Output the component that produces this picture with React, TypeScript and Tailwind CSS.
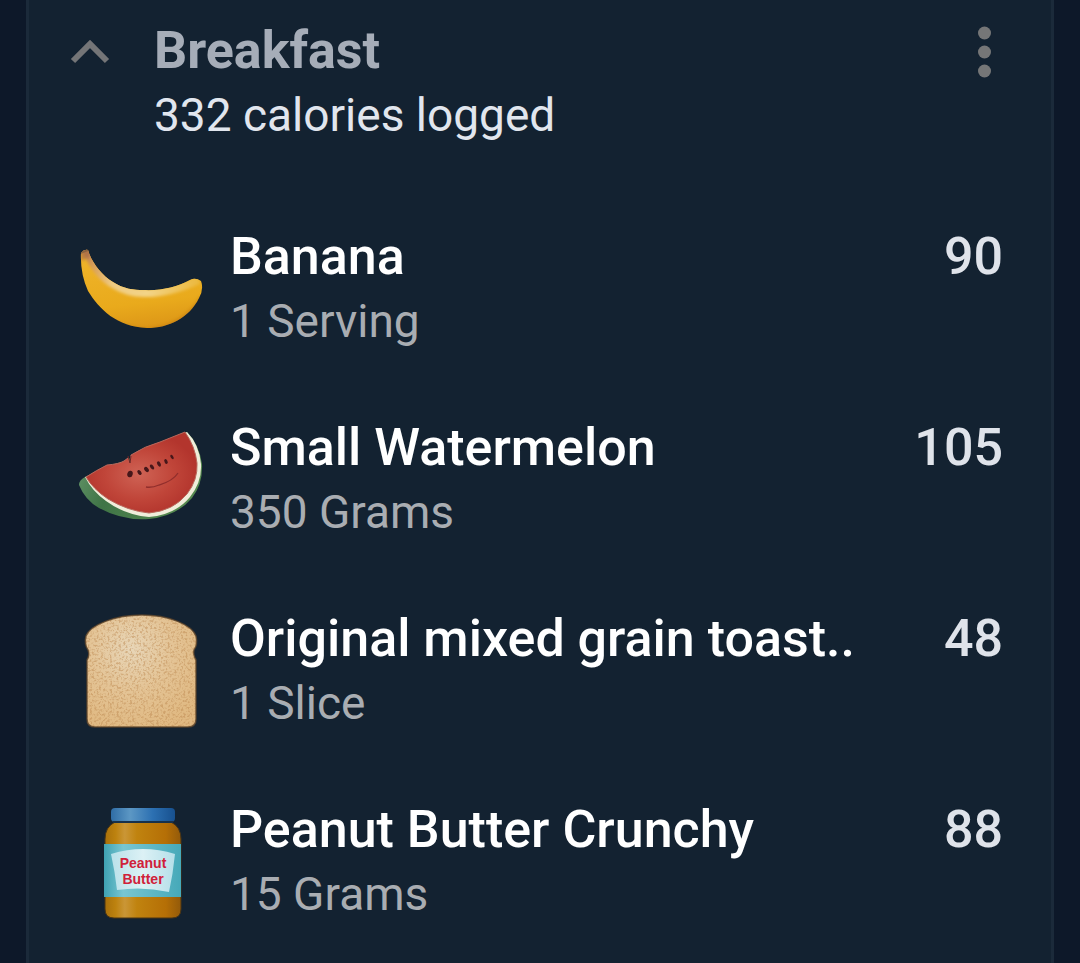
import type { ReactNode } from 'react';

interface FoodItem {
  id: string;
  name: string;
  amount: string;
  calories: number;
  icon: ReactNode;
}

function BananaIcon() {
  return (
    <svg viewBox="0 2 128 128" className="w-full h-full" aria-hidden="true">
      <defs>
        <linearGradient id="banana-body" x1="0" y1="0.2" x2="0.1" y2="1">
          <stop offset="0" stopColor="#f0b62c" />
          <stop offset="0.6" stopColor="#e9aa1c" />
          <stop offset="1" stopColor="#d58a14" />
        </linearGradient>
        <linearGradient id="banana-shine" gradientUnits="userSpaceOnUse" x1="6" y1="28" x2="124" y2="60">
          <stop offset="0" stopColor="#b5764a" />
          <stop offset="0.12" stopColor="#d9a05a" />
          <stop offset="0.3" stopColor="#efcb82" />
          <stop offset="0.6" stopColor="#f3d487" />
          <stop offset="1" stopColor="#ebb73a" />
        </linearGradient>
        <clipPath id="banana-clip">
          <path d="M4 30 Q7 26 11 27 C14 38 24 52 36 59 C46 66 58 67 66 67 C84 68 100 64 113 57 Q118 54 124 58 Q127 66 122 75 C112 95 92 105 70 105 C40 104 22 86 11 68 Q3 50 4 30Z" />
        </clipPath>
        <filter id="banana-soft" x="-10%" y="-20%" width="120%" height="140%">
          <feGaussianBlur stdDeviation="1.5" />
        </filter>
      </defs>
      <g clipPath="url(#banana-clip)">
        <rect width="128" height="128" fill="url(#banana-body)" />
        <path d="M9 24 C14 42 26 56 38 62 C48 68 58 70 66 70 C86 71 104 65 122 57" fill="none" stroke="url(#banana-shine)" strokeWidth="8" filter="url(#banana-soft)" />
        <path d="M6 70 Q26 106 70 107 Q106 105 125 74" fill="none" stroke="#b96f10" strokeWidth="4" opacity="0.5" filter="url(#banana-soft)" />
        <path d="M2 24 L13 24 L13 34 L4 38Z" fill="#a96c46" opacity="0.7" filter="url(#banana-soft)" />
        <path d="M3 30 L11 27" stroke="#8a6240" strokeWidth="2" />
      </g>
    </svg>
  );
}

function WatermelonIcon() {
  return (
    <svg viewBox="0 2 128 128" className="w-full h-full" aria-hidden="true">
      <defs>
        <radialGradient id="melon-flesh" cx="0.48" cy="0.52" r="0.52">
          <stop offset="0" stopColor="#cf6355" />
          <stop offset="0.6" stopColor="#c04539" />
          <stop offset="1" stopColor="#b3352d" />
        </radialGradient>
        <linearGradient id="melon-rind" x1="0" y1="0" x2="1" y2="0.3">
          <stop offset="0" stopColor="#6d9d72" />
          <stop offset="0.4" stopColor="#3f7446" />
          <stop offset="1" stopColor="#568a50" />
        </linearGradient>
      </defs>
      <path d="M8 63 Q2 66 2 71 Q8 86 22 94 Q46 107 72 105 Q100 102 115 84 Q126 70 125 50 Q122 30 110 18Q109 18 106 20 L55 43 L48 47 L30 52Z" fill="url(#melon-rind)" />
      <path d="M8 63 Q15 77 29 87 Q48 101 72 103 Q98 101 113 83 Q125 68 124 50 Q122 30 110 18 L106 20 L55 50Z" fill="#f0eedb" />
      <path d="M9 63 Q20 56 30 51 Q42 50 47 47 L51 44 L53 49 L54 41 Q68 32 83 28 L108 18 Q118 32 120 49 Q121 66 110 80 Q96 97 72 99 Q51 97 31 85 Q16 75 9 63Z" fill="url(#melon-flesh)" stroke="#b9685c" strokeWidth="1" />
      <path d="M51 42 L53 49 L54 42" fill="none" stroke="#6d2425" strokeWidth="1" />
      <g fill="#46171a">
        <ellipse cx="53" cy="60" rx="2.7" ry="3.3" transform="rotate(15 53 60)" />
        <ellipse cx="62.5" cy="58.5" rx="1.8" ry="2.8" transform="rotate(-35 62.5 58.5)" />
        <ellipse cx="69.5" cy="55.5" rx="1.9" ry="2.9" transform="rotate(-40 69.5 55.5)" />
        <ellipse cx="75" cy="53" rx="1.7" ry="2.8" transform="rotate(-40 75 53)" />
        <ellipse cx="82" cy="50" rx="1.7" ry="2.8" transform="rotate(-30 82 50)" />
        <ellipse cx="89" cy="47.5" rx="1.5" ry="2.6" transform="rotate(-25 89 47.5)" />
        <ellipse cx="95" cy="43" rx="1.3" ry="2.4" transform="rotate(-35 95 43)" />
      </g>
      <path d="M69 73 Q75 74 82 71 Q96 67 101 59" fill="none" stroke="#912e2c" strokeWidth="1.3" />
    </svg>
  );
}

function ToastIcon() {
  return (
    <svg viewBox="0 2 128 128" className="w-full h-full" aria-hidden="true">
      <defs>
        <radialGradient id="toast-body" cx="0.42" cy="0.34" r="0.65">
          <stop offset="0" stopColor="#e8d6b8" />
          <stop offset="0.5" stopColor="#e4c496" />
          <stop offset="1" stopColor="#e0b982" />
        </radialGradient>
        <filter id="toast-grain" x="0" y="0" width="100%" height="100%" colorInterpolationFilters="sRGB">
          <feTurbulence type="fractalNoise" baseFrequency="0.45" numOctaves="2" seed="4" />
          <feColorMatrix values="0 0 0 0 0.74  0 0 0 0 0.54  0 0 0 0 0.32  4 0 0 0 -1.9" />
        </filter>
        <clipPath id="toast-clip">
          <path d="M9 31 C13 20 38 10 65 10 C92 10 115 20 119 31 Q121 40 117 45 Q116 50 119 55 L119 114 Q119 122 111 122 L18 122 Q10 122 10 114 L10 55 Q13 50 11 45 Q7 39 9 31Z" />
        </clipPath>
      </defs>
      <g clipPath="url(#toast-clip)">
        <rect width="128" height="128" fill="url(#toast-body)" />
        <rect width="128" height="128" filter="url(#toast-grain)" opacity="0.5" />
      </g>
      <path d="M9 31 C13 20 38 10 65 10 C92 10 115 20 119 31 Q121 40 117 45 Q116 50 119 55 L119 114 Q119 122 111 122 L18 122 Q10 122 10 114 L10 55 Q13 50 11 45 Q7 39 9 31Z" fill="none" stroke="#5c4329" strokeWidth="1.5" opacity="0.8" />
    </svg>
  );
}

function PeanutButterIcon() {
  return (
    <svg viewBox="0 2 128 128" className="w-full h-full" aria-hidden="true">
      <defs>
        <linearGradient id="jar-body" x1="0" y1="0" x2="1" y2="0">
          <stop offset="0" stopColor="#a8700a" />
          <stop offset="0.14" stopColor="#bd820f" />
          <stop offset="0.26" stopColor="#ca9636" />
          <stop offset="0.42" stopColor="#c0830f" />
          <stop offset="0.8" stopColor="#b56f06" />
          <stop offset="1" stopColor="#935a0a" />
        </linearGradient>
        <linearGradient id="jar-lid" x1="0" y1="0" x2="1" y2="0">
          <stop offset="0" stopColor="#2f6da6" />
          <stop offset="0.3" stopColor="#5c97c4" />
          <stop offset="0.65" stopColor="#2c70b2" />
          <stop offset="1" stopColor="#17508e" />
        </linearGradient>
        <linearGradient id="jar-label" x1="0" y1="0" x2="1" y2="0">
          <stop offset="0" stopColor="#3fa2b3" />
          <stop offset="0.25" stopColor="#79c6d1" />
          <stop offset="1" stopColor="#46a9b9" />
        </linearGradient>
        <linearGradient id="jar-paper" x1="0" y1="0" x2="1" y2="0">
          <stop offset="0" stopColor="#b9e1ea" />
          <stop offset="0.5" stopColor="#dcf1f5" />
          <stop offset="1" stopColor="#b5dfe9" />
        </linearGradient>
      </defs>
      <path d="M38 26 L94 26 Q104 31 104 43 L104 113 Q104 122 95 122 L37 122 Q28 122 28 113 L28 43 Q28 31 38 26Z" fill="url(#jar-body)" stroke="#4a3515" strokeWidth="1" />
      <rect x="34" y="12" width="64" height="14" rx="4" fill="url(#jar-lid)" />
      <path d="M36 26 H96" stroke="#18314a" strokeWidth="2" />
      <rect x="27" y="48" width="77" height="53" fill="url(#jar-label)" />
      <path d="M34 58 Q66 48 98 58 Q96 78 92 96 Q66 90 40 94 Q38 76 34 58Z" fill="url(#jar-paper)" />
      <g fill="#d0213a" fontWeight="700" fontSize="14" textAnchor="middle" fontFamily="'Liberation Sans', sans-serif">
        <text x="66" y="72">Peanut</text>
        <text x="66" y="88">Butter</text>
      </g>
    </svg>
  );
}

const meal = { name: 'Breakfast', logged: 332 };

const foods: FoodItem[] = [
  { id: 'banana', name: 'Banana', amount: '1 Serving', calories: 90, icon: <BananaIcon /> },
  { id: 'watermelon', name: 'Small Watermelon', amount: '350 Grams', calories: 105, icon: <WatermelonIcon /> },
  { id: 'toast', name: 'Original mixed grain toast..', amount: '1 Slice', calories: 48, icon: <ToastIcon /> },
  { id: 'peanut-butter', name: 'Peanut Butter Crunchy', amount: '15 Grams', calories: 88, icon: <PeanutButterIcon /> },
];

export default function App() {
  return (
    <div className="min-h-screen flex bg-[#0d1829] px-[26px] font-['Roboto',sans-serif]">
      <main className="flex-1 min-w-0 bg-[#132231] border-x-[3px] border-[#1b2a3a] pt-[19px] pb-9">
        {/* Meal header */}
        <header className="flex items-start pl-[41px] pr-12">
          <button type="button" aria-label="Collapse Breakfast" className="w-10 h-16 mr-11 shrink-0 flex items-center justify-center">
            <svg viewBox="0 0 40 40" className="w-10 h-10" fill="none" stroke="#747577" strokeWidth="6">
              <path d="M3 30 L20 13 L37 30" />
            </svg>
          </button>
          <div className="flex-1 min-w-0">
            <h1 className="text-[52px] leading-[64px] font-bold text-[#a6adb8]">{meal.name}</h1>
            <p className="text-[46px] leading-[64px] text-[#e1e6ee]">{meal.logged} calories logged</p>
          </div>
          <button type="button" aria-label="Breakfast options" className="w-10 h-16 shrink-0 flex items-center justify-center">
            <svg viewBox="0 0 20 56" className="w-5 h-14" fill="#757677">
              <circle cx="11.5" cy="10" r="6.5" />
              <circle cx="11.5" cy="29" r="6.5" />
              <circle cx="11.5" cy="48" r="6.5" />
            </svg>
          </button>
        </header>

        {/* Logged foods */}
        <ul className="mt-[78px] px-12 flex flex-col gap-[63px]">
          {foods.map((food) => (
            <li key={food.id} className="flex items-start">
              <div className="w-32 h-32 mr-[25px] shrink-0">{food.icon}</div>
              <div className="flex-1 min-w-0">
                <h2 className="text-[52px] leading-[64px] font-medium text-white truncate">{food.name}</h2>
                <p className="text-[46px] leading-[64px] text-[#a9adb2]">{food.amount}</p>
              </div>
              <span className="ml-4 text-[52px] leading-[64px] font-medium text-[#dfe3ea]">{food.calories}</span>
            </li>
          ))}
        </ul>
      </main>
    </div>
  );
}
